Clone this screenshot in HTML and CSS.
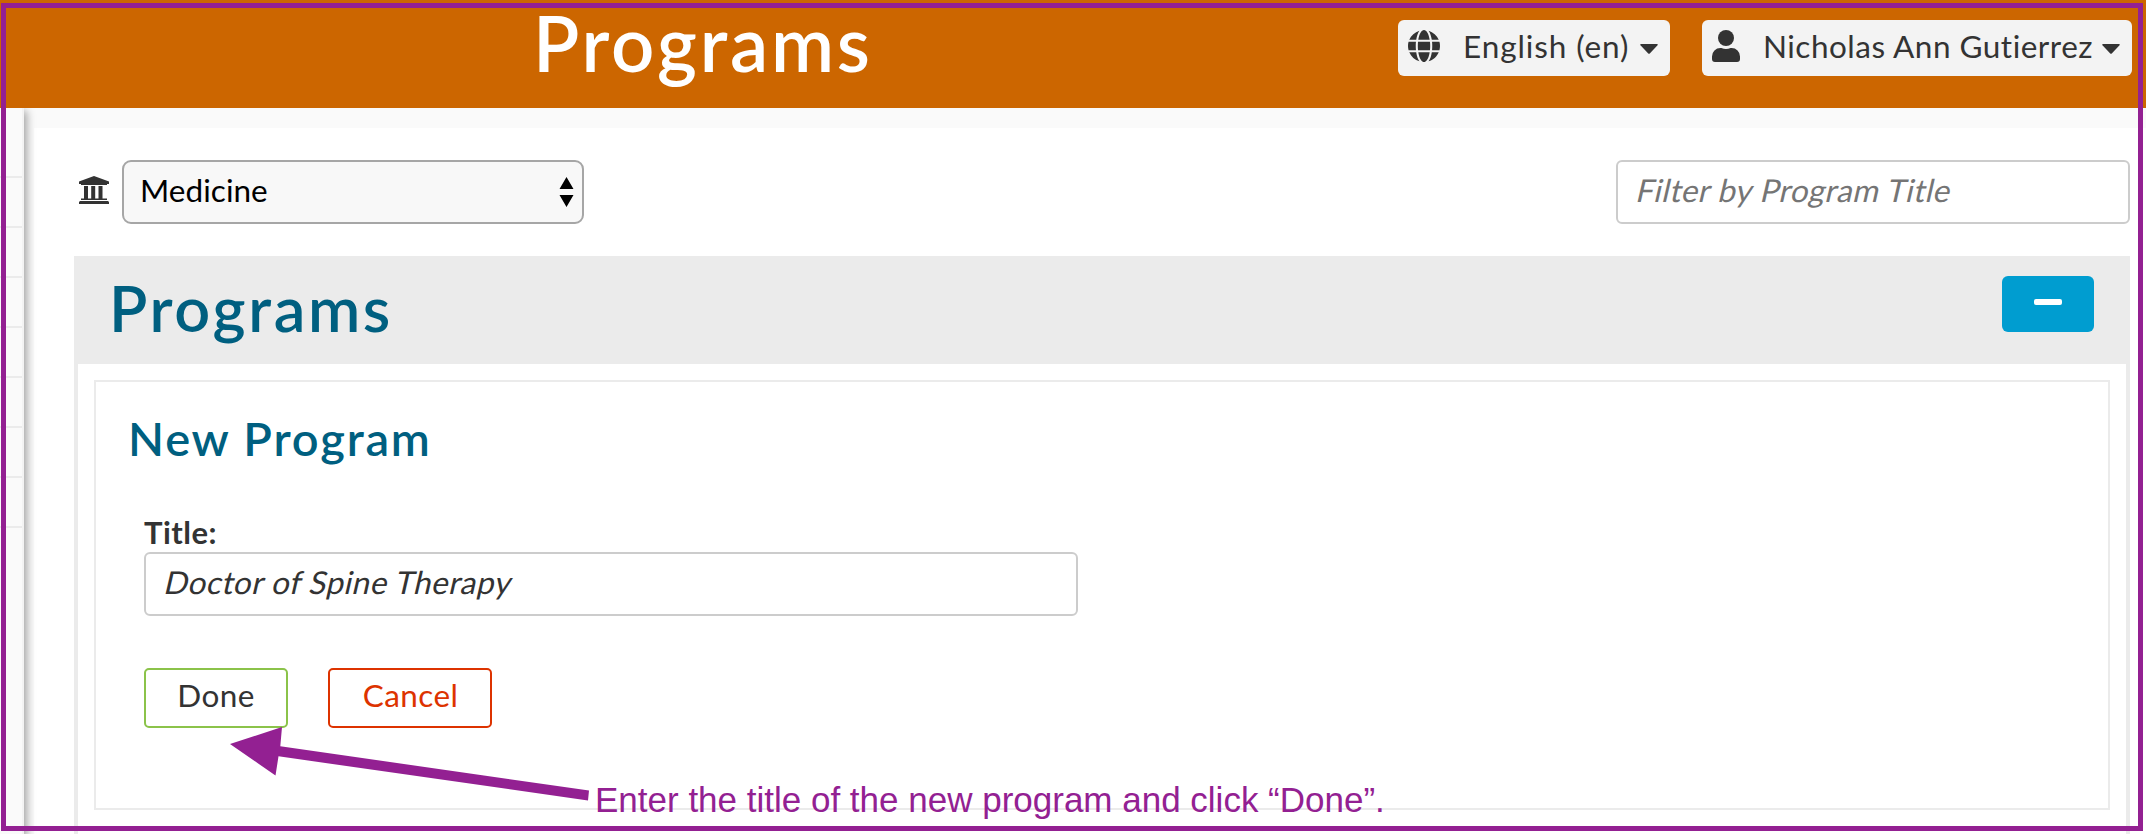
FILE: index.html
```
<!DOCTYPE html>
<html lang="en">
<head>
<meta charset="utf-8">
<title>Programs</title>
<link rel="stylesheet" href="styles.css">
</head>
<body>
<div class="page">
  <header class="topbar">
    <h1 class="topbar-title">Programs</h1>
    <nav class="topbar-menus">
      <button class="menu menu-lang" type="button">
        <svg class="globe" viewBox="0 0 496 496"><path d="M336.500 152C321.700 60.800 287.300 0 248 0s-73.700 60.800-88.500 152h177zM152 248c0 22.200 1.200 43.500 3.300 64h185.300c2.100-20.500 3.300-41.800 3.300-64s-1.200-43.500-3.300-64H155.300c-2.100 20.500-3.300 41.800-3.300 64zm324.700-96c-28.600-67.900-86.500-120.400-158-141.600 24.400 33.800 41.200 84.700 50 141.600h108zM177.200 10.400C105.800 31.600 47.800 84.100 19.300 152h108c8.700-56.900 25.500-107.800 49.900-141.600zM487.400 184H372.700c2.100 21 3.300 42.500 3.300 64s-1.200 43-3.300 64h114.600c5.500-20.500 8.600-41.800 8.600-64s-3.100-43.500-8.500-64zM120 248c0-21.500 1.200-43 3.300-64H8.600C3.200 204.500 0 225.800 0 248s3.200 43.500 8.600 64h114.600c-2-21-3.200-42.500-3.200-64zm39.500 96c14.800 91.200 49.200 152 88.500 152s73.700-60.800 88.500-152h-177zm159.300 141.600c71.400-21.200 129.400-73.700 158-141.600h-108c-8.800 56.900-25.600 107.800-50 141.600zM19.300 344c28.600 67.900 86.500 120.400 158 141.600-24.400-33.800-41.200-84.700-50-141.600h-108z"/></svg>
        <span class="menu-label lang-label">English (en)</span>
        <svg class="caret" viewBox="0 0 18 10"><path d="M1 0h16q1.500 0 .5 1.200L10 9.300q-1 1-2 0L.5 1.200Q-.5 0 1 0z"/></svg>
      </button>
      <button class="menu menu-user" type="button">
        <svg class="person" viewBox="0 0 28 32"><circle cx="14" cy="8" r="8"/><path d="M8.400 18h1q4.600 2 9.200 0h1A8.400 8.400 0 0 1 28 26.400V29a3 3 0 0 1-3 3H3a3 3 0 0 1-3-3v-2.600A8.400 8.400 0 0 1 8.400 18z"/></svg>
        <span class="menu-label user-label">Nicholas Ann Gutierrez</span>
        <svg class="caret" viewBox="0 0 18 10"><path d="M1 0h16q1.500 0 .5 1.200L10 9.300q-1 1-2 0L.5 1.200Q-.5 0 1 0z"/></svg>
      </button>
    </nav>
  </header>
  <div class="body">
    <aside class="sidebar">
      <div class="side-item side-first"></div>
      <div class="side-item"></div><div class="side-item"></div><div class="side-item"></div>
      <div class="side-item"></div><div class="side-item"></div><div class="side-item"></div><div class="side-item"></div>
    </aside>
    <main class="main">
      <div class="filters">
        <svg class="bank" viewBox="0 0 30 28"><path d="M15 0 30 5.500V8h-2v1H2V8H0V5.500zM5 10h4v12.500h3.200V10h4v12.500h3.300V10h4v12.500H28V24H2v-1.500h3zM1 25h28l1 1v2H0v-2z"/></svg>
        <div class="select-wrap">
          <select class="school"><option>Medicine</option></select>
          <svg class="updown" viewBox="0 0 14 30"><path d="M7 0l7 12H0zM0 18h14L7 30z"/></svg>
        </div>
        <div class="field filter"><input class="field-input" type="text" placeholder="Filter by Program Title"></div>
      </div>
      <section class="panel">
        <div class="panel-head">
          <h2 class="panel-title">Programs</h2>
          <button class="collapse" type="button" aria-label="Collapse"><span class="minus"></span></button>
        </div>
        <div class="panel-body">
          <div class="form-card">
            <h3 class="card-title">New Program</h3>
            <div class="form">
              <label class="label" for="title">Title:</label>
              <div class="field title-field"><input class="field-input" id="title" type="text" value="Doctor of Spine Therapy"></div>
              <div class="actions">
                <button class="btn done" type="button">Done</button>
                <button class="btn cancel" type="button">Cancel</button>
              </div>
            </div>
          </div>
        </div>
      </section>
    </main>
  </div>
  <div class="frame"></div>
  <svg class="arrow" viewBox="0 0 370 80"><path d="M0 17 52 0 50.300 19.300 359 63.500 358 73.500 48.500 29.300 45.500 48.500z"/></svg>
  <p class="note">Enter the title of the new program and click “Done”.</p>
</div>
</body>
</html>
```
FILE: styles.css
```
* { box-sizing: border-box; }
body { margin: 0; font: 31.5px Lato, "Open Sans", sans-serif; color: #333; background: #fff; }
h1, h2, h3, p { margin: 0; }
button, input, select { font: inherit; color: inherit; margin: 0; }
svg { display: block; fill: #333; flex: none; }

.page { position: relative; width: 2146px; height: 834px; overflow: hidden; display: flex; flex-direction: column; }

.topbar { flex: none; height: 108px; background: #c60; display: flex; justify-content: space-between; align-items: flex-start; padding: 0 14px 0 533px; }
.topbar-title { font-size: 76px; line-height: 86px; font-weight: 600; letter-spacing: 2.8px; color: #fff; }
.topbar-menus { display: flex; gap: 32px; padding-top: 20px; }
.menu { height: 56px; border: 0; border-radius: 6px; background: #f3f3f3; display: flex; align-items: flex-start; justify-content: space-between; padding: 0 12px 0 10px; }
.menu-lang { width: 272px; }
.menu-user { width: 430px; }
.menu-label { line-height: 52px; white-space: nowrap; margin-right: auto; }
.lang-label { margin-left: 23px; letter-spacing: .9px; }
.user-label { margin-left: 23px; letter-spacing: .5px; }
.globe { width: 32px; height: 32px; margin-top: 10px; }
.person { width: 28px; height: 32px; margin-top: 10px; }
.caret { width: 18px; height: 10px; margin-top: 24px; }

.body { flex: 1; display: flex; min-height: 0; background: #fafafa; }
.sidebar { flex: none; width: 24px; background: #fafafa; border-right: 2px solid #f3f3f3; box-shadow: 2px 4px 8px 1px rgba(0,0,0,.35); clip-path: inset(0 -14px 0 0); z-index: 1; }
.side-item { height: 50px; border-bottom: 2px solid #ebebeb; }
.side-first { height: 70px; }
.main { flex: 1; margin: 20px 0 0 10px; padding: 32px 16px 0 40px; background: #fff; }

.filters { display: flex; align-items: flex-start; height: 96px; padding-left: 5px; }
.bank { width: 30px; height: 28px; margin: 16px 13px 0 0; }
.select-wrap { position: relative; width: 462px; margin-right: auto; }
.school { appearance: none; width: 100%; height: 64px; border: 2px solid #a6a6a6; border-radius: 9px; background: #f8f8f8; color: #000; padding: 0 14px 5px 16px; letter-spacing: .05px; }
.updown { position: absolute; right: 10px; top: 17px; width: 15px; height: 30px; fill: #000; }
.field { height: 64px; border: 2px solid #ccc; border-radius: 6px; background: #fff; padding: 0 16px; }
.field-input { display: block; width: 100%; height: 60px; border: 0; outline: 0; padding: 0 0 5px 3px; background: transparent; letter-spacing: inherit; transform: skewX(-13deg); }
.filter { width: 514px; letter-spacing: .4px; }
.field-input::placeholder { color: #757575; opacity: 1; }

.panel { height: 600px; border: solid #ebebeb; border-width: 0 4px; }
.panel-head { height: 108px; background: #ebebeb; display: flex; justify-content: space-between; align-items: flex-start; padding: 0 32px 0 31px; }
.panel-title { font-size: 63px; line-height: 103px; font-weight: 600; letter-spacing: 2.6px; color: #005f80; }
.collapse { width: 92px; height: 56px; margin-top: 20px; border: 0; border-radius: 6px; background: #009dd0; padding: 0 0 4px; display: flex; align-items: center; justify-content: center; }
.minus { width: 28px; height: 6px; border-radius: 2px; background: #fff; }
.panel-body { padding: 16px; }
.form-card { height: 430px; border: 2px solid #ebebeb; }
.card-title { height: 131px; padding-left: 32px; font-size: 47px; line-height: 112px; font-weight: 600; letter-spacing: 1.8px; color: #005f80; }
.form { padding-left: 48px; display: flex; flex-direction: column; align-items: flex-start; }
.label { height: 39px; line-height: 38px; font-size: 31px; font-weight: 700; letter-spacing: .5px; }
.title-field { width: 934px; letter-spacing: .45px; }
.actions { display: flex; gap: 40px; margin-top: 52px; }
.btn { height: 60px; background: #fff; border: 2px solid; border-radius: 5px; padding: 0 0 5px; letter-spacing: .4px; line-height: 51px; }
.done { width: 144px; border-color: #8bc34a; }
.cancel { width: 164px; padding-left: 1px; color: #d30; }

/* Tutorial annotations drawn over the page */
.frame { position: absolute; left: 1px; top: 3px; width: 2142px; height: 828px; border: 5px solid #932092; z-index: 2; }
.arrow { position: absolute; left: 230px; top: 727px; width: 370px; height: 80px; fill: #932092; z-index: 2; }
.note { position: absolute; left: 595px; top: 780px; font: 35px/40px "Liberation Sans", sans-serif; color: #932092; white-space: nowrap; z-index: 2; }
```
